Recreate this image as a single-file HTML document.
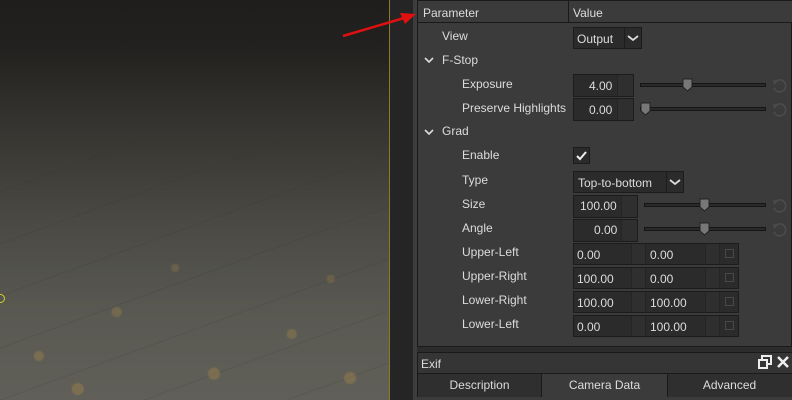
<!DOCTYPE html><html><head><style>
*{margin:0;padding:0;box-sizing:border-box}
body{width:792px;height:400px;overflow:hidden;background:#2a2a2a;font-family:"Liberation Sans","DejaVu Sans",sans-serif;font-size:12px;color:#dcdcdc;position:relative}
.a{position:absolute}
.t{position:absolute;line-height:14px;white-space:nowrap}
.box{position:absolute;background:#2b2b2b;border:1px solid #1c1c1c}
.spin{position:absolute;background:#2f2f2f;border-left:1px solid #252525}
.track{position:absolute;height:4px;background:#2a2a2a;border:1px solid #151515}
</style></head><body>
<div class="a" style="left:0;top:0;width:389px;height:400px;background:linear-gradient(180deg,#1f1e1c 0%,#22211f 12%,#34332f 30%,#4a4944 55%,#5a5a53 80%,#605f58 100%)"></div>
<div class="a" style="left:0;top:140px;width:389px;height:260px;background:repeating-linear-gradient(160deg,transparent 0 48px,rgba(40,40,35,.25) 48px 49px);opacity:.5"></div>
<div class="a" style="left:0;top:180px;width:389px;height:220px;background:
radial-gradient(circle at 10% 80%,rgba(180,140,70,.35) 0 4px,transparent 6px),
radial-gradient(circle at 30% 60%,rgba(180,140,70,.3) 0 4px,transparent 6px),
radial-gradient(circle at 55% 88%,rgba(180,140,70,.35) 0 5px,transparent 7px),
radial-gradient(circle at 75% 70%,rgba(180,140,70,.3) 0 4px,transparent 6px),
radial-gradient(circle at 90% 90%,rgba(180,140,70,.35) 0 5px,transparent 7px),
radial-gradient(circle at 45% 40%,rgba(180,140,70,.25) 0 3px,transparent 5px),
radial-gradient(circle at 20% 95%,rgba(180,140,70,.35) 0 5px,transparent 7px),
radial-gradient(circle at 85% 45%,rgba(180,140,70,.25) 0 3px,transparent 5px)"></div>
<div class="a" style="left:-4px;top:294px;width:9px;height:9px;border:1px solid #d8d020;border-radius:50%"></div>
<div class="a" style="left:389px;top:0;width:1px;height:400px;background:#8a7a2a"></div>
<div class="a" style="left:390px;top:0;width:23px;height:400px;background:#252525"></div>
<div class="a" style="left:413px;top:0;width:4px;height:400px;background:#3d3d3d"></div>
<svg class="a" style="left:340px;top:8px" width="80" height="32"><line x1="3" y1="28" x2="64" y2="10" stroke="#e01010" stroke-width="2.5"/><polygon points="76,6 60,5 65,16" fill="#e01010"/></svg>
<div class="a" style="left:417px;top:0;width:375px;height:347px;background:#3b3b3b;border:1px solid #1a1a1a"></div>
<div class="a" style="left:418px;top:1px;width:374px;height:22px;background:#3b3b3b;border-bottom:1px solid #1a1a1a"></div>
<div class="a" style="left:568px;top:1px;width:1px;height:22px;background:#1a1a1a"></div>
<div class="t" style="left:423px;top:6px">Parameter</div>
<div class="t" style="left:573px;top:6px">Value</div>
<div class="t" style="left:442px;top:29px">View</div>
<div class="t" style="left:442px;top:53px">F-Stop</div>
<div class="t" style="left:462px;top:77px">Exposure</div>
<div class="t" style="left:462px;top:101px">Preserve Highlights</div>
<div class="t" style="left:442px;top:124px">Grad</div>
<div class="t" style="left:462px;top:148px">Enable</div>
<div class="t" style="left:462px;top:173px">Type</div>
<div class="t" style="left:462px;top:197px">Size</div>
<div class="t" style="left:462px;top:221px">Angle</div>
<div class="t" style="left:462px;top:245px">Upper-Left</div>
<div class="t" style="left:462px;top:269px">Upper-Right</div>
<div class="t" style="left:462px;top:293px">Lower-Right</div>
<div class="t" style="left:462px;top:317px">Lower-Left</div>
<svg class="a" style="left:424px;top:56px" width="10" height="8"><polyline points="1,2 5,6 9,2" fill="none" stroke="#ddd" stroke-width="1.6"/></svg>
<svg class="a" style="left:424px;top:128px" width="10" height="8"><polyline points="1,2 5,6 9,2" fill="none" stroke="#ddd" stroke-width="1.6"/></svg>
<div class="box" style="left:573px;top:27px;width:69px;height:22px"></div>
<div class="a" style="left:624px;top:28px;width:1px;height:20px;background:#1c1c1c"></div>
<div class="t" style="left:577px;top:32px">Output</div>
<svg class="a" style="left:627px;top:34px" width="12" height="8"><polyline points="1,2 6,6 11,2" fill="none" stroke="#ddd" stroke-width="1.8"/></svg>
<div class="box" style="left:573px;top:74px;width:61px;height:23px"></div><div class="spin" style="left:617px;top:75px;width:16px;height:21px"></div>
<div class="t" style="left:589px;top:79px">4.00</div>
<div class="track" style="left:640px;top:83px;width:126px"></div>
<svg class="a" style="left:682px;top:78px" width="11" height="14"><path d="M1 1H10V9L5.5 13L1 9Z" fill="#777" stroke="#222"/></svg>
<svg class="a" style="left:771px;top:78px" width="16" height="16"><path d="M4 4A6 6 0 1 1 3 10" fill="none" stroke="#4c4c4c" stroke-width="1.5"/><polygon points="2,2 7,3 3,7" fill="#4c4c4c"/></svg>
<div class="box" style="left:573px;top:98px;width:61px;height:23px"></div><div class="spin" style="left:617px;top:99px;width:16px;height:21px"></div>
<div class="t" style="left:589px;top:103px">0.00</div>
<div class="track" style="left:640px;top:107px;width:126px"></div>
<svg class="a" style="left:640px;top:102px" width="11" height="14"><path d="M1 1H10V9L5.5 13L1 9Z" fill="#777" stroke="#222"/></svg>
<svg class="a" style="left:771px;top:102px" width="16" height="16"><path d="M4 4A6 6 0 1 1 3 10" fill="none" stroke="#4c4c4c" stroke-width="1.5"/><polygon points="2,2 7,3 3,7" fill="#4c4c4c"/></svg>
<div class="box" style="left:573px;top:147px;width:17px;height:17px"></div>
<svg class="a" style="left:575px;top:149px" width="13" height="13"><polyline points="2,7 5,10 11,3" fill="none" stroke="#eee" stroke-width="2"/></svg>
<div class="box" style="left:573px;top:171px;width:111px;height:22px"></div>
<div class="a" style="left:666px;top:172px;width:1px;height:20px;background:#1c1c1c"></div>
<div class="t" style="left:578px;top:176px">Top-to-bottom</div>
<svg class="a" style="left:669px;top:178px" width="12" height="8"><polyline points="1,2 6,6 11,2" fill="none" stroke="#ddd" stroke-width="1.8"/></svg>
<div class="box" style="left:573px;top:195px;width:65px;height:23px"></div><div class="spin" style="left:621px;top:196px;width:16px;height:21px"></div>
<div class="t" style="left:580px;top:199px">100.00</div>
<div class="track" style="left:644px;top:203px;width:122px"></div>
<svg class="a" style="left:699px;top:198px" width="11" height="14"><path d="M1 1H10V9L5.5 13L1 9Z" fill="#777" stroke="#222"/></svg>
<svg class="a" style="left:771px;top:198px" width="16" height="16"><path d="M4 4A6 6 0 1 1 3 10" fill="none" stroke="#4c4c4c" stroke-width="1.5"/><polygon points="2,2 7,3 3,7" fill="#4c4c4c"/></svg>
<div class="box" style="left:573px;top:219px;width:65px;height:23px"></div><div class="spin" style="left:621px;top:220px;width:16px;height:21px"></div>
<div class="t" style="left:594px;top:223px">0.00</div>
<div class="track" style="left:644px;top:227px;width:122px"></div>
<svg class="a" style="left:699px;top:222px" width="11" height="14"><path d="M1 1H10V9L5.5 13L1 9Z" fill="#777" stroke="#222"/></svg>
<svg class="a" style="left:771px;top:222px" width="16" height="16"><path d="M4 4A6 6 0 1 1 3 10" fill="none" stroke="#4c4c4c" stroke-width="1.5"/><polygon points="2,2 7,3 3,7" fill="#4c4c4c"/></svg>
<div class="box" style="left:573px;top:243px;width:166px;height:22px"></div><div class="spin" style="left:631px;top:244px;width:15px;height:20px;border-right:1px solid #252525"></div><div class="spin" style="left:705px;top:244px;width:15px;height:20px;border-right:1px solid #252525"></div><div class="a" style="left:725px;top:249px;width:9px;height:9px;border:1px solid #484848"></div>
<div class="t" style="left:577px;top:248px">0.00</div><div class="t" style="left:650px;top:248px">0.00</div>
<div class="box" style="left:573px;top:267px;width:166px;height:22px"></div><div class="spin" style="left:631px;top:268px;width:15px;height:20px;border-right:1px solid #252525"></div><div class="spin" style="left:705px;top:268px;width:15px;height:20px;border-right:1px solid #252525"></div><div class="a" style="left:725px;top:273px;width:9px;height:9px;border:1px solid #484848"></div>
<div class="t" style="left:577px;top:272px">100.00</div><div class="t" style="left:650px;top:272px">0.00</div>
<div class="box" style="left:573px;top:291px;width:166px;height:22px"></div><div class="spin" style="left:631px;top:292px;width:15px;height:20px;border-right:1px solid #252525"></div><div class="spin" style="left:705px;top:292px;width:15px;height:20px;border-right:1px solid #252525"></div><div class="a" style="left:725px;top:297px;width:9px;height:9px;border:1px solid #484848"></div>
<div class="t" style="left:577px;top:296px">100.00</div><div class="t" style="left:650px;top:296px">100.00</div>
<div class="box" style="left:573px;top:315px;width:166px;height:22px"></div><div class="spin" style="left:631px;top:316px;width:15px;height:20px;border-right:1px solid #252525"></div><div class="spin" style="left:705px;top:316px;width:15px;height:20px;border-right:1px solid #252525"></div><div class="a" style="left:725px;top:321px;width:9px;height:9px;border:1px solid #484848"></div>
<div class="t" style="left:577px;top:320px">0.00</div><div class="t" style="left:650px;top:320px">100.00</div>
<div class="a" style="left:417px;top:347px;width:375px;height:6px;background:#2c2c2c"></div>
<div class="a" style="left:417px;top:352px;width:375px;height:22px;background:#353535;border-top:1px solid #1a1a1a;border-bottom:1px solid #1a1a1a;border-left:1px solid #1a1a1a"></div>
<div class="t" style="left:421px;top:357px">Exif</div>
<svg class="a" style="left:758px;top:355px" width="14" height="14"><rect x="4" y="1" width="9" height="8" fill="none" stroke="#eee" stroke-width="2"/><rect x="1" y="5" width="8" height="8" fill="#353535" stroke="#eee" stroke-width="2"/></svg>
<svg class="a" style="left:776px;top:355px" width="14" height="14"><path d="M2 2L12 12M12 2L2 12" stroke="#eee" stroke-width="2.5"/></svg>
<div class="a" style="left:417px;top:374px;width:125px;height:26px;background:#2f2f2f;border-left:1px solid #1a1a1a;border-right:1px solid #1a1a1a"></div>
<div class="a" style="left:542px;top:374px;width:125px;height:26px;background:#3b3b3b"></div>
<div class="a" style="left:667px;top:374px;width:125px;height:26px;background:#2f2f2f;border-left:1px solid #1a1a1a"></div>
<div class="a" style="left:417px;top:397px;width:375px;height:3px;background:#3b3b3b"></div>
<div class="t" style="left:417px;top:378px;width:125px;text-align:center">Description</div>
<div class="t" style="left:542px;top:378px;width:125px;text-align:center">Camera Data</div>
<div class="t" style="left:667px;top:378px;width:125px;text-align:center">Advanced</div>
</body></html>
